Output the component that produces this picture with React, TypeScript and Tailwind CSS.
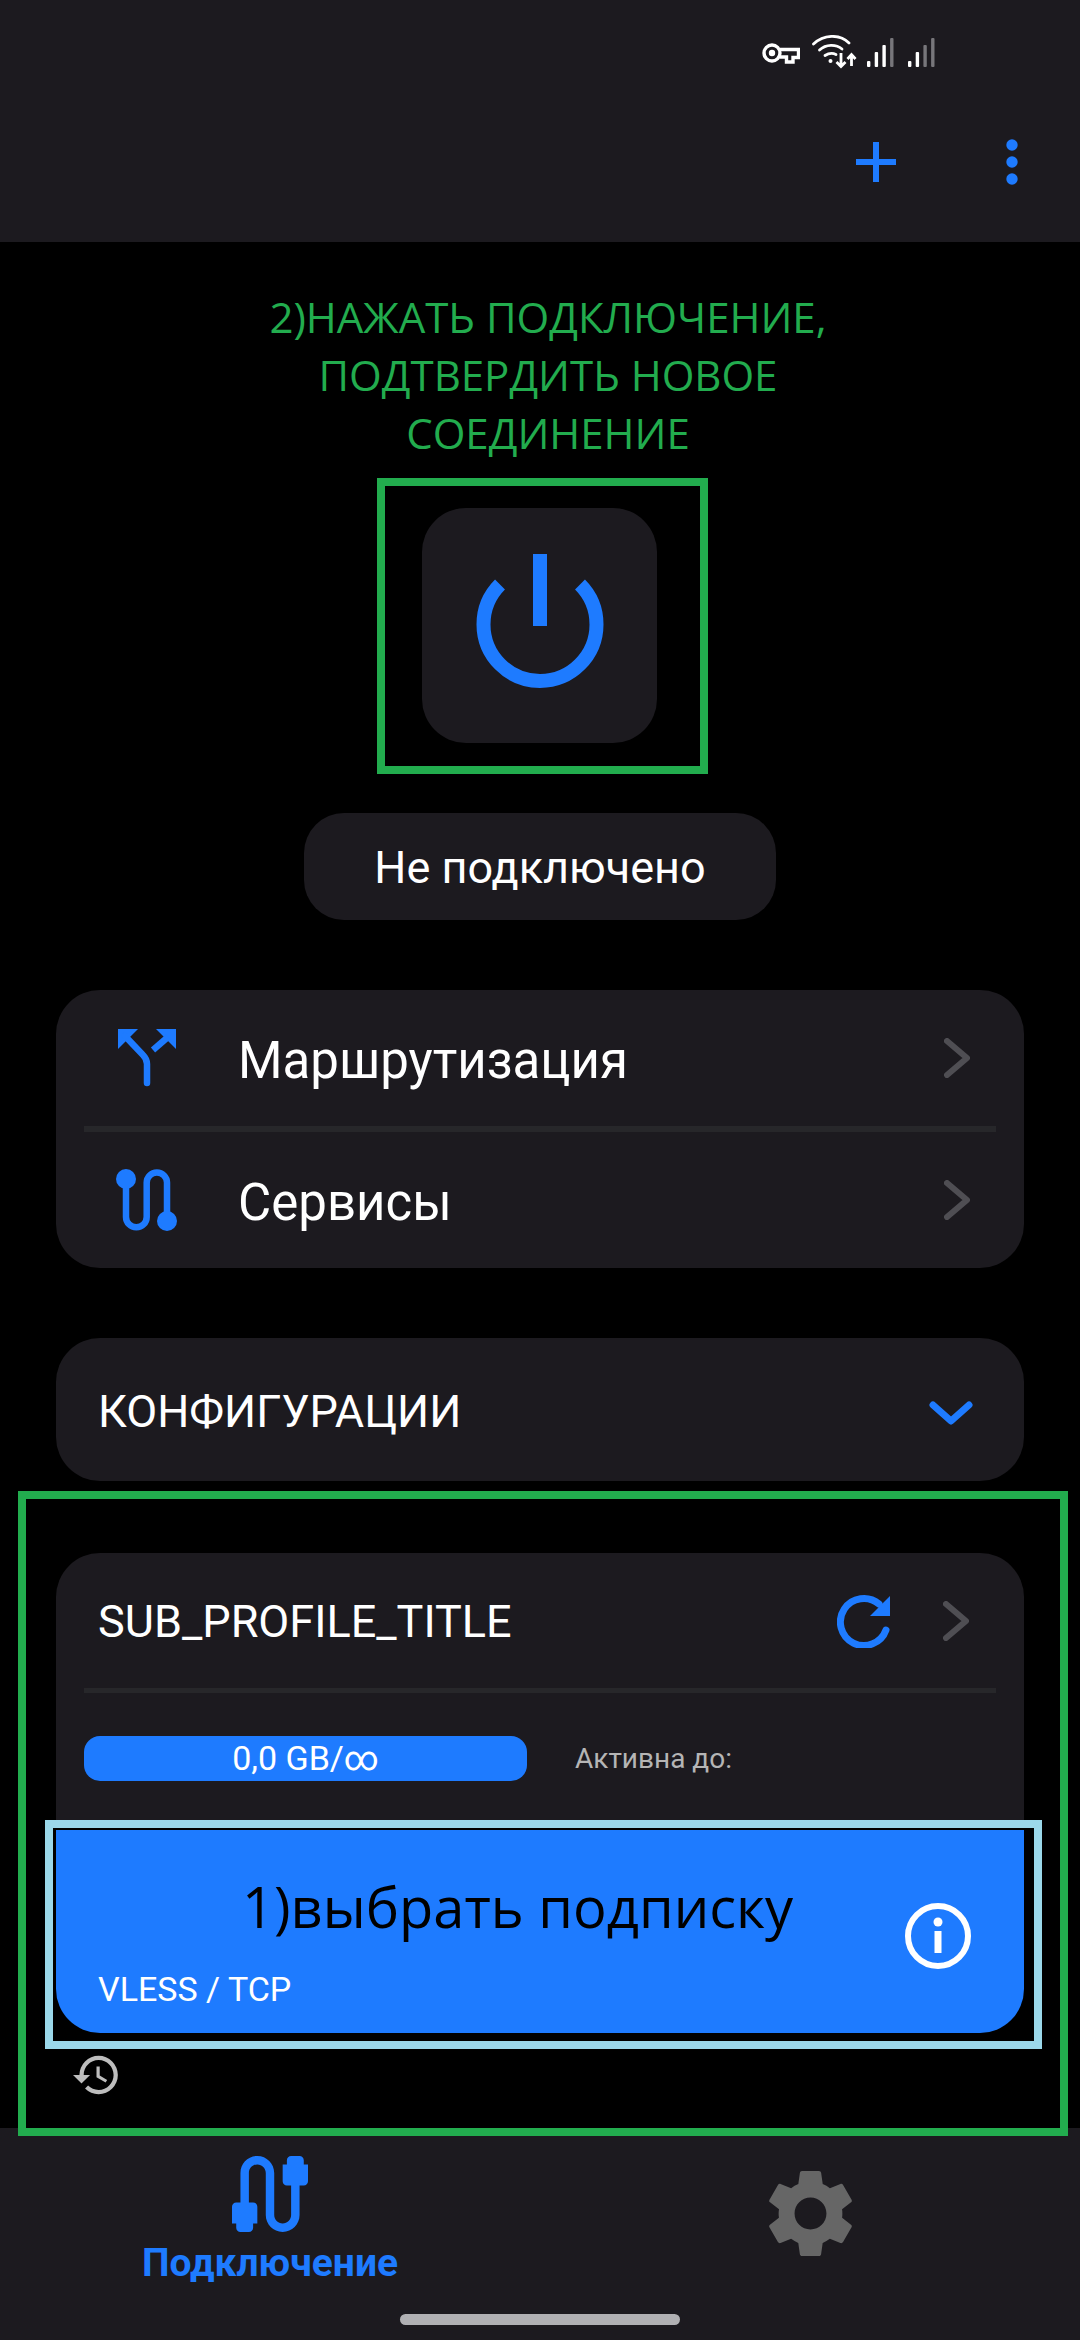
const BLUE = "#1e7bff";

const Chevron = () => (
  <svg width="26" height="40" viewBox="0 0 26 40" fill="none" stroke="#4f4e53" strokeWidth="6" strokeLinecap="round" strokeLinejoin="round">
    <path d="M3 3 L23 20 L3 37" />
  </svg>
);

const Bars = ({ greyFrom }: { greyFrom: number }) => (
  <svg width="28" height="30" viewBox="0 0 28 30">
    {[
      [0, 24],
      [7.7, 15],
      [15.4, 8],
      [23.1, 1],
    ].map(([x, y], i) => (
      <rect key={i} x={x} y={y} width="3.4" height={30 - y} rx="1" fill={i >= greyFrom ? "#77767a" : "#ffffff"} />
    ))}
  </svg>
);

const StatusBar = () => (
  <div className="flex h-[100px] items-start pl-[762px] pt-[35px]">
    <svg width="38" height="21" viewBox="0 0 38 21" fill="none" stroke="#fff" strokeWidth="3.4" className="mt-[8px]">
      <circle cx="10" cy="10" r="8" />
      <path d="M18 6.5 H36.5 V14.5 H31 V19 H24.5 V14 H18" />
      <circle cx="10" cy="10" r="1.5" fill="#fff" />
    </svg>
    <svg width="46" height="34" viewBox="0 0 46 34" fill="none" stroke="#fff" strokeWidth="2.8" className="ml-[12px]">
      <path d="M1.5 9 C12 -1 28 -1 37 8" strokeLinecap="round" />
      <path d="M7.5 15 C14 9 24 9 30 14" strokeLinecap="round" />
      <path d="M13 20.5 C17 18 21 18 24 19.5" strokeLinecap="round" />
      <circle cx="18.5" cy="26" r="2" fill="#fff" stroke="none" />
      <path d="M29 18 V31 M24.5 27 L29 31.5 L33.5 27" />
      <path d="M39.5 31 V20 M35.5 24 L39.5 19.5 L43.5 24" />
    </svg>
    <div className="ml-[9px] mt-[2px]">
      <Bars greyFrom={3} />
    </div>
    <div className="ml-[13px] mt-[2px]">
      <Bars greyFrom={2} />
    </div>
  </div>
);

const TopBar = () => (
  <div className="h-[242px] bg-[#1c1a1f]">
    <StatusBar />
    <div className="flex items-start pl-[856px] pt-[42px]">
      <svg width="40" height="40" viewBox="0 0 40 40" fill={BLUE}>
        <rect x="17" y="0" width="6" height="40" />
        <rect x="0" y="17" width="40" height="6" />
      </svg>
      <svg width="12" height="46" viewBox="0 0 12 46" fill={BLUE} className="ml-[110px] mt-[-3px]">
        <circle cx="6" cy="6" r="5.7" />
        <circle cx="6" cy="23" r="5.7" />
        <circle cx="6" cy="40" r="5.7" />
      </svg>
    </div>
  </div>
);

const PowerIcon = () => (
  <svg width="128" height="136" viewBox="0 0 128 136" fill="none" stroke={BLUE} strokeWidth="14" className="mb-[8px]">
    <path d="M64 0 V72" />
    <path d="M24 30.5 A56.5 56.5 0 1 0 104 30.5" />
  </svg>
);

const RouteIcon = () => (
  <svg width="62" height="62" viewBox="0 0 62 62" fill="none">
    <path d="M2 2 H22 L2 22 Z" fill={BLUE} />
    <path d="M40 2 H60 V22 Z" fill={BLUE} />
    <path d="M9 9 L27 28 Q31 32 31 37 V56" stroke={BLUE} strokeWidth="6.5" strokeLinecap="round" />
    <path d="M37 23 L52 10" stroke={BLUE} strokeWidth="6.5" />
  </svg>
);

const ServiceIcon = () => (
  <svg width="62" height="62" viewBox="0 0 62 62" fill="none">
    <path d="M10 10 V48 A10.35 10.35 0 0 0 30.7 48 V13.6 A10.15 10.15 0 0 1 51 13.6 V52" stroke={BLUE} strokeWidth="6.5" />
    <circle cx="10" cy="10" r="10" fill={BLUE} />
    <circle cx="51" cy="52" r="10" fill={BLUE} />
  </svg>
);

const MenuRow = ({ icon, label }: { icon: React.ReactNode; label: string }) => (
  <div className="flex h-[136px] items-center pl-[60px] pr-[54px]">
    {icon}
    <span className="ml-[60px] mt-[6px] flex-1 text-[51px] text-white">{label}</span>
    <Chevron />
  </div>
);

const Divider = ({ h }: { h: string }) => <div className={`mx-[28px] bg-[#27272a] ${h}`} />;

const SubscriptionBlock = () => (
  <div className="relative z-10 mb-[-8px] ml-[18px] mt-[10px] h-[645px] w-[1050px] border-[8px] border-[#22ac4e] pt-[54px]">
    <div className="ml-[30px] h-[267px] w-[968px] rounded-t-[44px] bg-[#1c1a1f]">
      <div className="flex h-[135px] items-center pl-[42px] pr-[55px]">
        <span className="mt-[3px] flex-1 text-[45px] text-white">SUB_PROFILE_TITLE</span>
        <svg width="54" height="54" viewBox="0 0 54 54" fill="none" className="mr-[52px]">
          <path d="M49 36 A23.5 23.5 0 1 1 42 10" stroke={BLUE} strokeWidth="7" strokeLinecap="round" />
          <path d="M53 2 V22 H33 Z" fill={BLUE} />
        </svg>
        <Chevron />
      </div>
      <Divider h="h-[5px]" />
      <div className="ml-[28px] mt-[43px] flex items-center">
        <div className="flex h-[45px] w-[443px] items-center justify-center rounded-[16px] bg-[#1e7bff] text-[34px] text-white">
          0,0 GB/∞
        </div>
        <span className="ml-[48px] text-[28px] text-[#b5b5b5]">Активна до:</span>
      </div>
    </div>
    <div className="ml-[19px] h-[229px] w-[997px] border-[8px] border-[#9bd8ea] bg-black pl-[3px] pt-[2px]">
      <div className="flex h-[203px] w-[968px] items-start rounded-b-[44px] bg-[#1e7bff] pr-[53px] pt-[46px]">
        <div className="flex-1">
          <div className="pl-[186px] font-['Open_Sans',sans-serif] text-[56px] leading-[60px] text-black">
            1)выбрать подписку
          </div>
          <div className="mt-[33px] pl-[42px] text-[34px] leading-[40px] text-white">VLESS / TCP</div>
        </div>
        <svg width="66" height="66" viewBox="0 0 66 66" fill="none" className="mt-[27px]">
          <circle cx="33" cy="33" r="30" stroke="#fff" strokeWidth="6" />
          <rect x="29.5" y="28" width="7" height="22" fill="#fff" />
          <circle cx="33" cy="19" r="4.5" fill="#fff" />
        </svg>
      </div>
    </div>
    <svg width="47" height="42" viewBox="1 3 22 18" fill="#bdbdbd" className="ml-[47px] mt-[5px]">
      <path d="M13 3a9 9 0 0 0-9 9H1l3.89 3.89.07.14L9 12H6c0-3.87 3.13-7 7-7s7 3.13 7 7-3.13 7-7 7c-1.93 0-3.68-.79-4.94-2.06l-1.42 1.42A8.954 8.954 0 0 0 13 21a9 9 0 0 0 0-18zm-1 5v5l4.28 2.54.72-1.21-3.5-2.08V8H12z" />
    </svg>
  </div>
);

const BottomNav = () => (
  <div className="h-[212px] bg-[#1c1a1f]">
    <div className="grid h-[186px] grid-cols-2">
      <div className="flex flex-col items-center pt-[28px]">
        <svg width="76" height="76" viewBox="3 3 18 18" fill={BLUE}>
          <path d="M20 5V4c0-.55-.45-1-1-1h-2c-.55 0-1 .45-1 1v1h-1v4c0 .55.45 1 1 1h1v7c0 1.1-.9 2-2 2s-2-.9-2-2V7c0-2.21-1.79-4-4-4S5 4.79 5 7v7H4c-.55 0-1 .45-1 1v4h1v1c0 .55.45 1 1 1h2c.55 0 1-.45 1-1v-1h1v-4c0-.55-.45-1-1-1H7V7c0-1.1.9-2 2-2s2 .9 2 2v10c0 2.21 1.79 4 4 4s4-1.79 4-4v-7h1c.55 0 1-.45 1-1V5h-1z" />
        </svg>
        <span className="mt-[9px] text-[39px] font-bold leading-[44px] text-[#1e7bff]">Подключение</span>
      </div>
      <div className="flex justify-center pt-[43px]">
        <svg width="85" height="85" viewBox="2.4 2.4 19.2 19.2" fill="#666666">
          <path d="M19.14,12.94c0.04-0.3,0.06-0.61,0.06-0.94c0-0.32-0.02-0.64-0.07-0.94l2.03-1.58c0.18-0.14,0.23-0.41,0.12-0.61 l-1.92-3.32c-0.12-0.22-0.37-0.29-0.59-0.22l-2.39,0.96c-0.5-0.38-1.03-0.7-1.62-0.94L14.4,2.81c-0.04-0.24-0.24-0.41-0.48-0.41 h-3.84c-0.24,0-0.43,0.17-0.47,0.41L9.25,5.35C8.66,5.59,8.12,5.92,7.63,6.29L5.24,5.33c-0.22-0.08-0.47,0-0.59,0.22L2.74,8.87 C2.62,9.08,2.66,9.34,2.86,9.48l2.03,1.58C4.84,11.36,4.8,11.69,4.8,12s0.02,0.64,0.07,0.94l-2.03,1.58 c-0.18,0.14-0.23,0.41-0.12,0.61l1.92,3.32c0.12,0.22,0.37,0.29,0.59,0.22l2.39-0.96c0.5,0.38,1.03,0.7,1.62,0.94l0.36,2.54 c0.05,0.24,0.24,0.41,0.48,0.41h3.84c0.24,0,0.44-0.17,0.47-0.41l0.36-2.54c0.59-0.24,1.13-0.56,1.62-0.94l2.39,0.96 c0.22,0.08,0.47,0,0.59-0.22l1.92-3.32c0.12-0.22,0.07-0.47-0.12-0.61L19.14,12.94z M12,15.6c-1.98,0-3.6-1.62-3.6-3.6 s1.62-3.6,3.6-3.6s3.6,1.62,3.6,3.6S13.98,15.6,12,15.6z" />
        </svg>
      </div>
    </div>
    <div className="ml-[400px] h-[11px] w-[280px] rounded-full bg-[#b0b0b3]" />
  </div>
);

const App = () => {
  return (
    <div className="h-[2340px] w-[1080px] overflow-hidden bg-black font-['Roboto',sans-serif]">
      <TopBar />

      <div className="mt-[46px] pl-[16px] text-center font-['Open_Sans',sans-serif] text-[42px] leading-[58px] text-[#22ac4e]">
        <div>2)НАЖАТЬ ПОДКЛЮЧЕНИЕ,</div>
        <div>ПОДТВЕРДИТЬ НОВОЕ</div>
        <div>СОЕДИНЕНИЕ</div>
      </div>

      <div className="ml-[377px] mt-[16px] h-[296px] w-[331px] border-[8px] border-[#22ac4e] pl-[37px] pt-[22px]">
        <div className="flex h-[235px] w-[235px] items-center justify-center rounded-[44px] bg-[#1c1a1f]">
          <PowerIcon />
        </div>
      </div>

      <div className="ml-[304px] mt-[39px] flex h-[107px] w-[472px] items-center justify-center rounded-[40px] bg-[#1c1a1f] pt-[3px] text-[45px] text-white">
        Не подключено
      </div>

      <div className="ml-[56px] mt-[70px] w-[968px] rounded-[44px] bg-[#1c1a1f]">
        <MenuRow icon={<RouteIcon />} label="Маршрутизация" />
        <Divider h="h-[6px]" />
        <MenuRow icon={<ServiceIcon />} label="Сервисы" />
      </div>

      <div className="ml-[56px] mt-[70px] flex h-[143px] w-[968px] items-center rounded-[44px] bg-[#1c1a1f] pl-[42px] pr-[51px]">
        <span className="mt-[5px] flex-1 text-[45px] text-white">КОНФИГУРАЦИИ</span>
        <svg width="44" height="24" viewBox="0 0 44 24" fill="none" stroke={BLUE} strokeWidth="7" strokeLinecap="round" strokeLinejoin="round" className="mt-[6px]">
          <path d="M4 4 L22 20 L40 4" />
        </svg>
      </div>

      <SubscriptionBlock />
      <BottomNav />
    </div>
  );
};

export default App;
